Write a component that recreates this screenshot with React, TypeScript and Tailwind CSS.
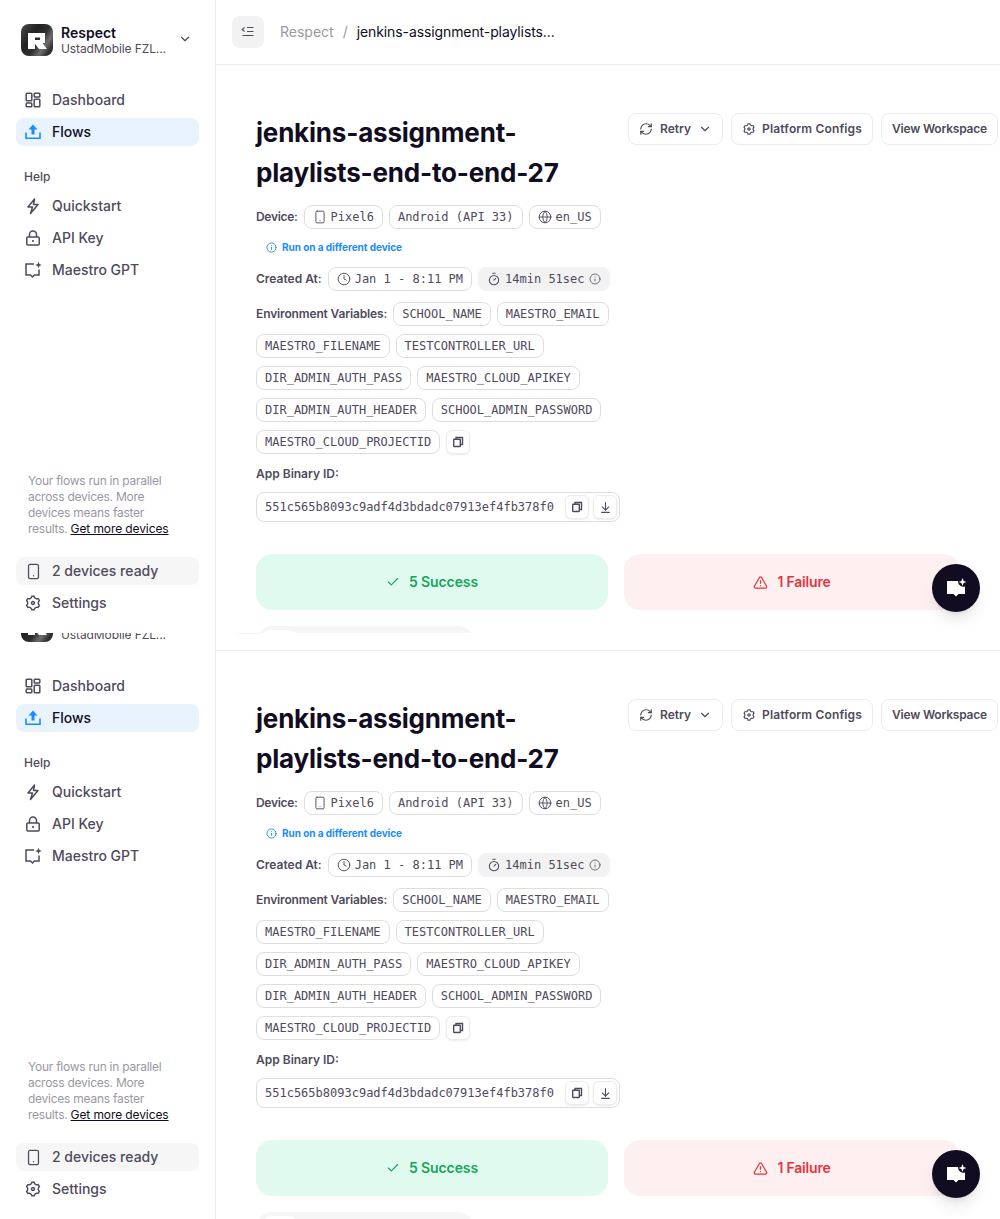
import type { ReactNode } from "react";
import {
  ArrowDownToLine,
  Check,
  ChevronDown,
  Clock,
  Globe,
  Info,
  RefreshCw,
  Smartphone,
  Timer,
  TriangleAlert,
} from "lucide-react";
import { RiSettings3Line } from "react-icons/ri";

const ENV_VARS = [
  "SCHOOL_NAME",
  "MAESTRO_EMAIL",
  "MAESTRO_FILENAME",
  "TESTCONTROLLER_URL",
  "DIR_ADMIN_AUTH_PASS",
  "MAESTRO_CLOUD_APIKEY",
  "DIR_ADMIN_AUTH_HEADER",
  "SCHOOL_ADMIN_PASSWORD",
  "MAESTRO_CLOUD_PROJECTID",
];

function Logo() {
  return (
    <div className="size-8 shrink-0 overflow-hidden rounded-lg bg-[linear-gradient(125deg,#4a4a4a,#222_35%,#2e2e2e_55%,#6e6e6e_72%,#2a2a2a_88%,#555)]">
      <svg viewBox="0 0 32 32" className="size-8">
        <path
          fill="#fff"
          fillRule="evenodd"
          d="M7 9H24V19H21.5L26 25H18L14 20V25H7ZM14 13.5V16H19V13.5Z"
        />
      </svg>
    </div>
  );
}

function DashboardIcon() {
  return (
    <svg viewBox="0 0 18 18" className="size-[18px]" fill="none" stroke="currentColor" strokeWidth="1.5">
      <rect x="2.2" y="2.2" width="5.6" height="7.6" rx="0.8" />
      <rect x="2.2" y="12" width="5.6" height="3.8" rx="0.8" />
      <rect x="10.2" y="2.2" width="5.6" height="3.8" rx="0.8" />
      <rect x="10.2" y="8.2" width="5.6" height="7.6" rx="0.8" />
    </svg>
  );
}

function FlowsIcon() {
  return (
    <svg viewBox="0 0 18 18" className="size-[18px] text-[#1a8cff]" fill="none">
      <path fill="currentColor" d="M9 1.5 13.5 6.5H10.5V11.5H7.5V6.5H4.5z" />
      <path stroke="currentColor" strokeWidth="1.6" d="M2 9.5V15.2H16V9.5" />
    </svg>
  );
}

function BoltIcon() {
  return (
    <svg viewBox="0 0 18 18" className="size-[18px]" fill="none" stroke="currentColor" strokeWidth="1.5" strokeLinejoin="round">
      <path d="M10.5 2 4 10H8.5L6.5 16.5 14 7.5H9.5Z" />
    </svg>
  );
}

function LockIcon() {
  return (
    <svg viewBox="0 0 18 18" className="size-[18px]" fill="none" stroke="currentColor" strokeWidth="1.5">
      <rect x="2.8" y="8" width="12.4" height="8" rx="1" />
      <path d="M5.5 8V5.5a3.5 3.5 0 0 1 7 0V8" />
      <circle cx="9" cy="12" r="1.1" fill="currentColor" stroke="none" />
    </svg>
  );
}

function GptIcon() {
  return (
    <svg viewBox="0 0 18 18" className="size-[18px]" fill="none" stroke="currentColor" strokeWidth="1.5">
      <path d="M10 3H2V14H6.5L8.5 16L10.5 14H15V8.5" />
      <path fill="currentColor" stroke="none" d="M14.5 0.8 15.4 3.1 17.7 4 15.4 4.9 14.5 7.2 13.6 4.9 11.3 4 13.6 3.1z" />
    </svg>
  );
}

function CopyIcon() {
  return (
    <svg viewBox="0 0 12 12" className="size-3" fill="none" stroke="currentColor" strokeWidth="1.4">
      <path d="M4 3V1.5H10.5V8.5H8.5" />
      <rect x="1.7" y="3.2" width="6.6" height="7.3" rx="0.6" />
    </svg>
  );
}

function NavItem({ icon, label, active, muted }: { icon: ReactNode; label: string; active?: boolean; muted?: boolean }) {
  return (
    <div
      className={`flex h-7 items-center gap-[10px] rounded-lg px-2 text-sm font-medium ${
        active ? "bg-[#e8f3fe] text-[#110c22]" : muted ? "bg-[#f6f6f6] text-[#4f4a5c]" : "text-[#4f4a5c]"
      }`}
    >
      <span className="flex size-[18px] shrink-0 items-center justify-center">{icon}</span>
      {label}
    </div>
  );
}

function Sidebar() {
  return (
    <aside className="flex w-[216px] shrink-0 flex-col border-r border-[#ececec] px-4">
      <div className="mt-[23px] flex items-center pl-[5px]">
        <Logo />
        <div className="ml-2 min-w-0 flex-1 pt-[1px]">
          <div className="text-sm leading-[18px] font-semibold text-[#110c22]">Respect</div>
          <div className="text-xs leading-[14px] tracking-[-0.1px] text-[#4f4a5c]">UstadMobile FZL...</div>
        </div>
        <ChevronDown className="mr-[7px] mb-[1px] size-[14px] text-[#4f4a5c]" strokeWidth={2} />
      </div>

      <nav className="mt-[30px] flex flex-col gap-1">
        <NavItem icon={<DashboardIcon />} label="Dashboard" />
        <NavItem icon={<FlowsIcon />} label="Flows" active />
      </nav>

      <div className="mt-[23px] mb-[7px] px-2 text-xs leading-4 font-medium text-[#4f4a5c]">Help</div>
      <div className="flex flex-col gap-1">
        <NavItem icon={<BoltIcon />} label="Quickstart" />
        <NavItem icon={<LockIcon />} label="API Key" />
        <NavItem icon={<GptIcon />} label="Maestro GPT" />
      </div>

      <p className="mt-[189px] w-[170px] px-3 text-xs leading-4 tracking-[-0.25px] text-[#9a97a3]">
        Your flows run in parallel across devices. More devices means faster results.{" "}
        <span className="tracking-[-0.1px] text-[#110c22] underline">Get more devices</span>
      </p>

      <div className="mt-5 flex flex-col gap-1">
        <NavItem
          icon={<Smartphone className="size-[17px]" strokeWidth={1.8} />}
          label="2 devices ready"
          muted
        />
        <NavItem icon={<RiSettings3Line className="size-[18px]" />} label="Settings" />
      </div>
    </aside>
  );
}

function ActionButton({ children }: { children: ReactNode }) {
  return (
    <button className="flex h-8 items-center gap-[6px] rounded-lg border border-[#ececec] bg-white px-[10px] text-xs font-semibold text-[#4f4a5c]">
      {children}
    </button>
  );
}

function Chip({ children, grey }: { children: ReactNode; grey?: boolean }) {
  return (
    <span
      className={`flex h-6 items-center gap-1 rounded-lg border px-2 font-['DejaVu_Sans_Mono',monospace] text-xs whitespace-nowrap text-[#4f4a5c] ${
        grey ? "border-[#f2f2f2] bg-[#f2f2f2]" : "border-[#dedede] bg-white"
      }`}
    >
      {children}
    </span>
  );
}

function Label({ children, className }: { children: ReactNode; className?: string }) {
  return <span className={`text-xs leading-6 font-semibold text-[#4f4a5c] ${className ?? ""}`}>{children}</span>;
}

function IconButton({ children }: { children: ReactNode }) {
  return (
    <button className="flex size-6 items-center justify-center rounded-md border border-[#ececec] bg-white text-[#4f4a5c] shadow-[0_1px_2px_rgba(0,0,0,0.08)]">
      {children}
    </button>
  );
}

function Flow() {
  return (
    <div className="overflow-hidden pt-12 pl-10">
      <div className="flex justify-between pr-[2px]">
        <h1 className="w-[340px] text-[26px] leading-10 font-bold tracking-[-0.2px] text-[#110c22]">
          jenkins-assignment-playlists-end-to-end-27
        </h1>
        <div className="flex gap-2">
          <ActionButton>
            <RefreshCw className="size-[14px]" strokeWidth={2} />
            <span className="ml-[1px]">Retry</span>
            <ChevronDown className="ml-[1px] size-[14px]" strokeWidth={2} />
          </ActionButton>
          <ActionButton>
            <RiSettings3Line className="size-[14px]" />
            <span className="tracking-[0.15px]">Platform Configs</span>
          </ActionButton>
          <ActionButton>
            <span className="tracking-[-0.2px]">View Workspace</span>
          </ActionButton>
        </div>
      </div>

      <div className="mt-3 flex items-center gap-[6px]">
        <Label className="tracking-[-0.3px]">Device:</Label>
        <Chip>
          <Smartphone className="size-[14px]" strokeWidth={1.6} />
          Pixel6
        </Chip>
        <Chip>Android (API 33)</Chip>
        <Chip>
          <Globe className="size-[14px]" strokeWidth={1.6} />
          en_US
        </Chip>
      </div>

      <div className="mt-[10px] flex h-4 items-center gap-[6px] pl-[10px] text-[10px] font-bold text-[#1a8cff]">
        <Info className="size-[11px]" strokeWidth={2} />
        <span className="-ml-[1px] tracking-[-0.05px]">Run on a different device</span>
      </div>

      <div className="mt-3 flex items-center gap-[6px]">
        <Label>Created At:</Label>
        <Chip>
          <Clock className="size-[14px]" strokeWidth={1.6} />
          Jan 1 - 8:11 PM
        </Chip>
        <Chip grey>
          <Timer className="size-[14px]" strokeWidth={1.8} />
          14min 51sec
          <Info className="size-3" strokeWidth={1.6} />
        </Chip>
      </div>

      <div className="mt-[11px] flex w-[364px] flex-wrap items-center gap-x-[6px] gap-y-2">
        <Label className="tracking-[-0.14px]">Environment Variables:</Label>
        {ENV_VARS.map((name) => (
          <Chip key={name}>{name}</Chip>
        ))}
        <IconButton>
          <CopyIcon />
        </IconButton>
      </div>

      <div className="mt-3 text-xs leading-4 font-semibold text-[#4f4a5c]">App Binary ID:</div>
      <div className="mt-[10px] flex h-[30px] w-[364px] items-center justify-between rounded-lg border border-[#dedede] pr-[2px] pl-2 font-['DejaVu_Sans_Mono',monospace] text-xs text-[#4f4a5c]">
        551c565b8093c9adf4d3bdadc07913ef4fb378f0
        <div className="flex gap-1">
          <IconButton>
            <CopyIcon />
          </IconButton>
          <IconButton>
            <ArrowDownToLine className="size-[13px]" strokeWidth={2} />
          </IconButton>
        </div>
      </div>

      <div className="mt-8 flex gap-4 pr-10">
        <div className="flex h-14 w-[352px] items-center justify-center gap-[9px] rounded-2xl bg-[#e0faf0] text-sm font-semibold tracking-[-0.1px] text-[#16a55a]">
          <Check className="size-[14px]" strokeWidth={2} />
          5 Success
        </div>
        <div className="flex h-14 flex-1 items-center justify-center gap-[9px] rounded-2xl bg-[#fef0f0] text-sm font-semibold tracking-[-0.2px] text-[#e5343d]">
          <TriangleAlert className="size-[15px]" strokeWidth={2} />
          1 Failure
        </div>
      </div>

      <div className="mt-4 h-10 w-[218px] rounded-2xl bg-[#f6f6f6] p-1">
        <div className="h-8 w-10 rounded-xl bg-white" />
      </div>
    </div>
  );
}

function Screen() {
  return (
    <div className="relative flex h-[633px] font-['Inter',sans-serif]">
      <Sidebar />
      <main className="flex min-w-0 flex-1 flex-col">
        <header className="flex h-[65px] shrink-0 items-center gap-4 border-b border-[#ececec] pl-4">
          <button className="flex size-8 items-center justify-center rounded-lg bg-[#f2f2f2] text-[#4f4a5c]">
            <svg viewBox="0 0 14 14" className="size-[14px]" fill="none" stroke="currentColor" strokeWidth="1.1">
              <path d="M3.5 2.5 1.2 4.5 3.5 6.5M6 2.5H12.5M6 6.5H12.5M1.5 10.5H12.5" />
            </svg>
          </button>
          <div className="flex items-center gap-[9px] text-sm">
            <span className="text-[#9a97a3]">Respect</span>
            <span className="text-[#9a97a3]">/</span>
            <span className="tracking-[-0.1px] text-[#110c22]">jenkins-assignment-playlists...</span>
          </div>
        </header>
        <Flow />
      </main>
      <button className="absolute top-[564px] left-[932px] flex size-12 items-center justify-center rounded-full bg-[#110c22] shadow-lg">
        <svg viewBox="0 0 24 24" className="size-6" fill="#fff">
          <path d="M14 5H3V18H9.5L12 20.5L14.5 18H21V10.5A5.5 5.5 0 0 1 14 5Z" />
          <path d="M18.5 2 19.6 5 22.5 6 19.6 7 18.5 10 17.4 7 14.5 6 17.4 5z" />
        </svg>
      </button>
    </div>
  );
}

export default function App() {
  return (
    <div className="h-[1219px] overflow-hidden bg-white">
      <Screen />
      <div className="h-[586px] overflow-hidden">
        <div className="-mt-[47px]">
          <Screen />
        </div>
      </div>
    </div>
  );
}
